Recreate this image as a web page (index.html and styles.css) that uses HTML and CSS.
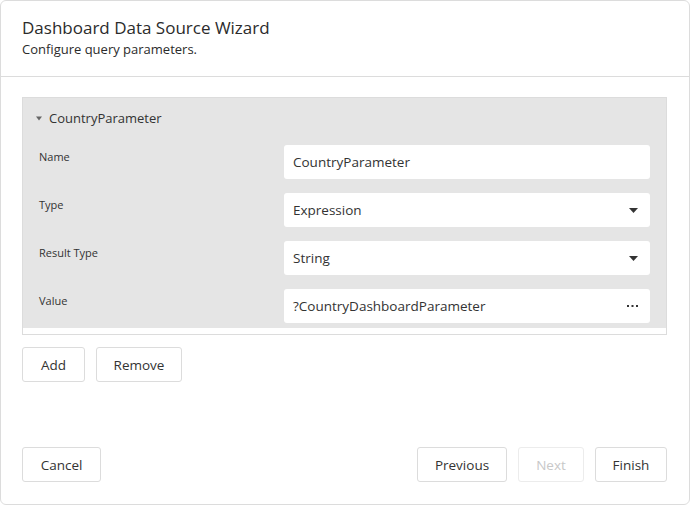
FILE: index.html
```html
<!DOCTYPE html>
<html>
<head>
<meta charset="utf-8">
<link rel="stylesheet" href="styles.css">
</head>
<body>
<div class="wizard">
  <div class="header">
    <div class="title">Dashboard Data Source Wizard</div>
    <div class="subtitle">Configure query parameters.</div>
  </div>
  <div class="content">
    <div class="params">
      <div class="group">
        <div class="group-header">
          <svg class="caret" width="6" height="5" viewBox="0 0 6 5"><path d="M0 0.5h6L3 4.5z" fill="#666"/></svg>
          <span>CountryParameter</span>
        </div>
        <div class="rows">
          <div class="row">
            <div class="label">Name</div>
            <div class="input"><span class="value">CountryParameter</span></div>
          </div>
          <div class="row">
            <div class="label">Type</div>
            <div class="input"><span class="value">Expression</span>
              <svg class="arrow" width="9" height="5" viewBox="0 0 9 5"><path d="M0 0h9L4.5 5z" fill="#333"/></svg>
            </div>
          </div>
          <div class="row">
            <div class="label">Result Type</div>
            <div class="input"><span class="value">String</span>
              <svg class="arrow" width="9" height="5" viewBox="0 0 9 5"><path d="M0 0h9L4.5 5z" fill="#333"/></svg>
            </div>
          </div>
          <div class="row">
            <div class="label">Value</div>
            <div class="input"><span class="value">?CountryDashboardParameter</span>
              <svg class="dots" width="11" height="2" viewBox="0 0 11 2"><rect x="0" y="0" width="2" height="2" fill="#333"/><rect x="4.5" y="0" width="2" height="2" fill="#333"/><rect x="9" y="0" width="2" height="2" fill="#333"/></svg>
            </div>
          </div>
        </div>
      </div>
    </div>
    <div class="actions">
      <button class="btn btn-add">Add</button>
      <button class="btn btn-remove">Remove</button>
    </div>
  </div>
  <div class="footer">
    <button class="btn btn-cancel">Cancel</button>
    <div class="nav">
      <button class="btn btn-prev">Previous</button>
      <button class="btn btn-next" disabled>Next</button>
      <button class="btn btn-finish">Finish</button>
    </div>
  </div>
</div>
</body>
</html>
```
FILE: styles.css
```css
* { box-sizing: border-box; }
html, body { margin: 0; padding: 0; background: #fff; }
body {
  font-family: "Segoe UI", "Open Sans", "Noto Sans", sans-serif;
  color: #333;
}
.wizard {
  width: 690px;
  height: 505px;
  border: 1px solid #dcdcdc;
  border-radius: 6px;
  display: flex;
  flex-direction: column;
  background: #fff;
}
.header {
  padding: 15px 21px 0;
  height: 76px;
  border-bottom: 1px solid #dcdcdc;
}
.title {
  font-size: 17px;
  line-height: 24px;
  color: #2b2b2b;
}
.subtitle {
  font-size: 13px;
  line-height: 18px;
  color: #2b2b2b;
}
.content {
  padding: 20px 22px 0 21px;
}
.params {
  border: 1px solid #dcdcdc;
  height: 238px;
  overflow: hidden;
  padding-bottom: 6px;
}
.group {
  background: #e5e5e5;
  height: 230px;
  overflow: hidden;
}
.group-header {
  height: 40px;
  display: flex;
  align-items: center;
  padding-left: 13px;
  font-size: 13px;
  color: #333;
}
.caret { margin-right: 7px; }
.rows {
  padding: 7px 16px 0 16px;
  display: flex;
  flex-direction: column;
  gap: 14px;
}
.row {
  display: grid;
  grid-template-columns: 1fr 366px;
}
.label {
  font-size: 11px;
  line-height: 14px;
  padding-top: 5px;
  color: #333;
}
.input {
  height: 34px;
  background: #fff;
  border-radius: 3px;
  display: flex;
  align-items: center;
  justify-content: space-between;
  padding: 0 12px 0 9px;
  font-size: 13.5px;
  color: #333;
}
.actions {
  display: flex;
  gap: 11px;
  margin-top: 12px;
}
.btn {
  height: 35px;
  border: 1px solid #dcdcdc;
  border-radius: 3px;
  background: #fff;
  font-family: inherit;
  font-size: 13.5px;
  color: #333;
  padding: 0;
}
.btn-add { width: 63px; }
.btn-remove { width: 86px; }
.btn-cancel { width: 79px; }
.btn-prev { width: 90px; }
.btn-next { width: 66px; color: #c8c8c8; border-color: #ececec; }
.btn-finish { width: 72px; }
.footer {
  margin-top: auto;
  padding: 0 22px 22px 21px;
  display: flex;
  justify-content: space-between;
}
.nav { display: flex; gap: 11px; }
```
